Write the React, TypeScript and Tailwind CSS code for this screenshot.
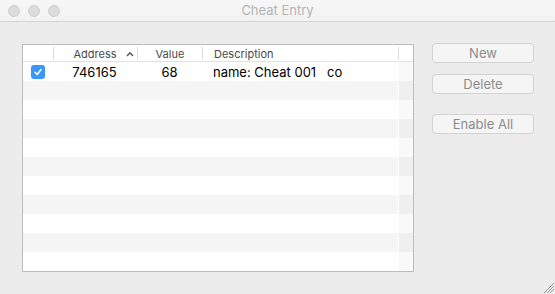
import React from "react";

const font = { fontFamily: "Inter, 'Liberation Sans', Arial, sans-serif" };

function HeaderSep() {
  return <div className="w-px h-[12px] bg-[#d9d9d9] self-center" />;
}

export default function App() {
  const rows = Array.from({ length: 11 }, (_, i) => i);
  return (
    <div className="w-[555px] h-[294px] bg-[#ececec] flex flex-col relative overflow-hidden" style={font}>
      {/* Title bar */}
      <div className="h-[22px] bg-gradient-to-b from-[#f7f7f7] to-[#f2f2f2] border-b border-[#d3d3d3] flex items-center relative">
        <div className="flex gap-[8px] pl-[8px]">
          <div className="w-[12px] h-[12px] rounded-full bg-[#dcdcdc] border border-[#d0d0d0]" />
          <div className="w-[12px] h-[12px] rounded-full bg-[#dcdcdc] border border-[#d0d0d0]" />
          <div className="w-[12px] h-[12px] rounded-full bg-[#dcdcdc] border border-[#d0d0d0]" />
        </div>
        <div className="absolute inset-0 flex items-center justify-center text-[13px] text-[#b5b5b5]">
          Cheat Entry
        </div>
      </div>

      <div className="flex pl-[22px] pt-[22px]">
        {/* Table */}
        <div className="w-[392px] h-[228px] border border-[#bcbcbc] bg-white flex flex-col">
          <div className="h-[17px] flex border-b border-[#e2e2e2] text-[11px] text-[#4a4a4a] leading-none">
            <div className="w-[30px]" />
            <HeaderSep />
            <div className="w-[83px] flex items-center justify-center gap-[9px] pl-[16px] pt-[2px]">
              <span>Address</span>
              <svg width="8" height="6" viewBox="0 0 8 6"><path d="M1 5 L4 1.8 L7 5" fill="none" stroke="#555" strokeWidth="1.4" /></svg>
            </div>
            <HeaderSep />
            <div className="w-[64px] flex items-center justify-center pt-[2px]">Value</div>
            <HeaderSep />
            <div className="w-[195px] flex items-center pl-[11px] pt-[2px]">Description</div>
            <HeaderSep />
            <div className="flex-1" />
          </div>
          <div className="flex flex-col">
            {rows.map((i) => (
              <div key={i} className={`h-[19px] flex items-center text-[13px] text-black ${i % 2 === 1 ? "bg-[#f5f5f5]" : "bg-white"}`}>
                {i === 0 ? (
                  <>
                    <div className="w-[30px] flex items-center pl-[8px]">
                      <div className="w-[14px] h-[14px] rounded-[3px] bg-[#3a96f7] flex items-center justify-center">
                        <svg width="10" height="10" viewBox="0 0 10 10"><path d="M2 5.3 L4.2 7.5 L8 2.5" fill="none" stroke="white" strokeWidth="1.6" strokeLinecap="round" strokeLinejoin="round" /></svg>
                      </div>
                    </div>
                    <div className="w-[84px] text-center pr-[1px] pt-[2px]">746165</div>
                    <div className="w-[65px] text-center pt-[2px]">68</div>
                    <div className="w-[196px] pl-[11px] whitespace-pre pt-[2px]">name: Cheat 001   co</div>
                  </>
                ) : (
                  <div className="w-[375px]" />
                )}
                <div className="flex-1 h-full border-l border-white bg-black/[0.025]" />
              </div>
            ))}
          </div>
        </div>

        {/* Buttons */}
        <div className="flex flex-col pl-[18px] -mt-[1px]">
          <button className="w-[102px] h-[20px] rounded-[4px] bg-[#f5f5f5] border border-[#d2d2d2] text-[13px] text-[#8c8c8c] leading-none">New</button>
          <button className="w-[102px] h-[20px] mt-[11px] rounded-[4px] bg-[#f5f5f5] border border-[#d2d2d2] text-[13px] text-[#8c8c8c] leading-none">Delete</button>
          <button className="w-[102px] h-[20px] mt-[20px] rounded-[4px] bg-[#f5f5f5] border border-[#d2d2d2] text-[13px] text-[#8c8c8c] leading-none">Enable All</button>
        </div>
      </div>

      {/* Resize grip */}
      <svg className="absolute right-[1px] bottom-[1px]" width="13" height="13" viewBox="0 0 13 13">
        <path d="M3 13 L13 3 M6 13 L13 6 M9 13 L13 9" stroke="#8e8e8e" strokeWidth="0.9" />
      </svg>
    </div>
  );
}
